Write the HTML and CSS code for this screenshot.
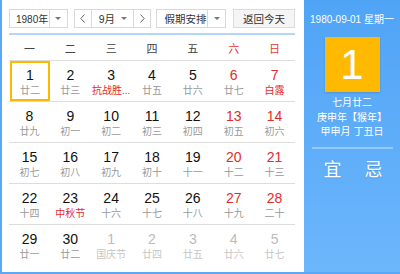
FILE: index.html
```html
<!DOCTYPE html>
<html lang="zh-CN">
<head>
  <meta charset="UTF-8" />
  <title>万年历</title>
  <meta name="viewport" content="width=device-width, initial-scale=1.0" />
  <link rel="stylesheet" href="styles.css">
</head>
<body>
<div class="calendar">
  <div class="main">
    <div class="toolbar">
      <div class="select year-select">
        <span class="select-text">1980年</span>
        <span class="select-arrow"><i class="caret"></i></span>
      </div>
      <div class="select month-select">
        <span class="step">
          <svg width="5" height="9" viewBox="0 0 5 9"><polyline points="4.5,0.5 0.8,4.5 4.5,8.5" fill="none" stroke="#666" stroke-width="1"/></svg>
        </span>
        <span class="month-text">9月<i class="caret"></i></span>
        <span class="step">
          <svg width="5" height="9" viewBox="0 0 5 9"><polyline points="0.5,0.5 4.2,4.5 0.5,8.5" fill="none" stroke="#666" stroke-width="1"/></svg>
        </span>
      </div>
      <div class="select holiday-select">
        <span class="select-text">假期安排</span>
        <span class="select-arrow"><i class="caret"></i></span>
      </div>
      <button class="today-btn">返回今天</button>
    </div>

    <div class="weekdays">
      <span>一</span><span>二</span><span>三</span><span>四</span><span>五</span>
      <span class="weekend">六</span><span class="weekend">日</span>
    </div>

    <div class="week">
      <div class="day selected"><b>1</b><small>廿二</small></div>
      <div class="day"><b>2</b><small>廿三</small></div>
      <div class="day"><b>3</b><small class="festival">抗战胜...</small></div>
      <div class="day"><b>4</b><small>廿五</small></div>
      <div class="day"><b>5</b><small>廿六</small></div>
      <div class="day weekend"><b>6</b><small>廿七</small></div>
      <div class="day weekend"><b>7</b><small class="festival">白露</small></div>
    </div>
    <div class="week">
      <div class="day"><b>8</b><small>廿九</small></div>
      <div class="day"><b>9</b><small>初一</small></div>
      <div class="day"><b>10</b><small>初二</small></div>
      <div class="day"><b>11</b><small>初三</small></div>
      <div class="day"><b>12</b><small>初四</small></div>
      <div class="day weekend"><b>13</b><small>初五</small></div>
      <div class="day weekend"><b>14</b><small>初六</small></div>
    </div>
    <div class="week">
      <div class="day"><b>15</b><small>初七</small></div>
      <div class="day"><b>16</b><small>初八</small></div>
      <div class="day"><b>17</b><small>初九</small></div>
      <div class="day"><b>18</b><small>初十</small></div>
      <div class="day"><b>19</b><small>十一</small></div>
      <div class="day weekend"><b>20</b><small>十二</small></div>
      <div class="day weekend"><b>21</b><small>十三</small></div>
    </div>
    <div class="week">
      <div class="day"><b>22</b><small>十四</small></div>
      <div class="day"><b>23</b><small class="festival">中秋节</small></div>
      <div class="day"><b>24</b><small>十六</small></div>
      <div class="day"><b>25</b><small>十七</small></div>
      <div class="day"><b>26</b><small>十八</small></div>
      <div class="day weekend"><b>27</b><small>十九</small></div>
      <div class="day weekend"><b>28</b><small>二十</small></div>
    </div>
    <div class="week">
      <div class="day"><b>29</b><small>廿一</small></div>
      <div class="day"><b>30</b><small>廿二</small></div>
      <div class="day other"><b>1</b><small>国庆节</small></div>
      <div class="day other"><b>2</b><small>廿四</small></div>
      <div class="day other"><b>3</b><small>廿五</small></div>
      <div class="day other"><b>4</b><small>廿六</small></div>
      <div class="day other"><b>5</b><small>廿七</small></div>
    </div>
  </div>

  <div class="side">
    <div class="side-date">1980-09-01 星期一</div>
    <div class="side-day">1</div>
    <div class="side-lunar">
      <p>七月廿二</p>
      <p>庚申年【猴年】</p>
      <p>甲申月 丁丑日</p>
    </div>
    <div class="side-yiji">
      <span>宜</span><span>忌</span>
    </div>
  </div>
</div>
</body>
</html>
```

FILE: styles.css
```css
html, body {
  margin: 0;
  padding: 0;
  background: #fff;
  font-family: "Liberation Sans", "Noto Sans CJK SC", sans-serif;
  color: #222;
}
.calendar {
  display: flex;
  width: 400px;
  height: 274px;
  box-sizing: border-box;
  border-left: 2px solid #5aa8f6;
  border-bottom: 2px solid #5aa8f6;
  overflow: hidden;
}
.main {
  width: 302px;
  box-sizing: border-box;
  padding: 9px 9px 0 7px;
  background: #fff;
}
.toolbar {
  display: flex;
  height: 19px;
  font-size: 10.5px;
  color: #333;
  white-space: nowrap;
}
.select {
  display: flex;
  box-sizing: border-box;
  height: 19px;
  border: 1px solid #d9d9d9;
  background: #fff;
  align-items: stretch;
}
.select-text {
  flex: 1;
  min-width: 0;
  display: flex;
  align-items: center;
  padding-left: 7px;
}
.select-arrow {
  width: 17px;
  flex: none;
  border-left: 1px solid #d9d9d9;
  display: flex;
  align-items: center;
  justify-content: center;
}
.caret {
  display: inline-block;
  width: 0;
  height: 0;
  border-left: 3px solid transparent;
  border-right: 3px solid transparent;
  border-top: 3px solid #777;
}
.year-select { width: 59px; margin-right: 6px; }
.year-select .select-text { font-size: 10px; padding-left: 6px; }
.month-select { width: 78px; margin-right: 5px; }
.holiday-select { width: 70px; margin-right: 7px; }
.step {
  width: 16px;
  flex: none;
  display: flex;
  align-items: center;
  justify-content: center;
}
.step:first-child { border-right: 1px solid #d9d9d9; }
.step:last-child { border-left: 1px solid #d9d9d9; }
.month-text {
  flex: 1;
  display: flex;
  align-items: center;
  justify-content: space-between;
  padding: 0 6px 0 7px;
}
.today-btn {
  width: 62px;
  height: 19px;
  box-sizing: border-box;
  border: 1px solid #dcdcdc;
  background: #f5f5f5;
  font-family: inherit;
  font-size: 10.5px;
  color: #333;
  padding: 0;
}
.weekdays {
  margin-top: 5px;
  border-top: 2px solid #b4d6fa;
  display: grid;
  grid-template-columns: repeat(7, 1fr);
  height: 24px;
  align-items: center;
  font-size: 11px;
  color: #444;
  text-align: center;
  padding-top: 1px;
}
.weekdays .weekend { color: #e33; }
.week {
  display: grid;
  grid-template-columns: repeat(7, 1fr);
  border-top: 1px solid #ddd;
}
.day {
  height: 40px;
  box-sizing: border-box;
  padding-top: 5px;
  display: flex;
  flex-direction: column;
  align-items: center;
}
.day b {
  font-weight: normal;
  font-size: 14px;
  line-height: 18px;
  color: #111;
}
.day small {
  font-size: 10px;
  line-height: 14px;
  color: #999;
}
.day.weekend b { color: #e32b2b; }
.day small.festival { color: #e32b2b; }
.day.other b { color: #bbb; }
.day.other small { color: #c6c6c6; }
.day.selected {
  box-shadow: inset 0 0 0 2px #ffb800;
  margin-left: 1px;
}
.side {
  flex: 1;
  background: linear-gradient(#50a4f6, #6cb6fc);
  color: #fff;
  display: flex;
  flex-direction: column;
  align-items: center;
}
.side-date {
  margin-top: 13px;
  font-size: 10px;
  line-height: 14px;
}
.side-day {
  margin-top: 10px;
  width: 55px;
  height: 55px;
  background: #ffb900;
  box-shadow: 0 1px 2px rgba(0,0,0,0.15);
  font-size: 42px;
  line-height: 55px;
  text-align: center;
}
.side-lunar {
  margin-top: 4px;
  font-size: 10px;
  line-height: 14.5px;
  text-align: center;
}
.side-lunar p { margin: 0; }
.side-yiji {
  margin-top: 7px;
  width: 81px;
  border-top: 2px solid rgba(255,255,255,0.35);
  display: flex;
  justify-content: space-between;
  padding: 11px 10px 0 12px;
  box-sizing: border-box;
  font-size: 18px;
  line-height: 20px;
  text-shadow: 0 1px 1px rgba(0,0,0,0.12);
}
```
